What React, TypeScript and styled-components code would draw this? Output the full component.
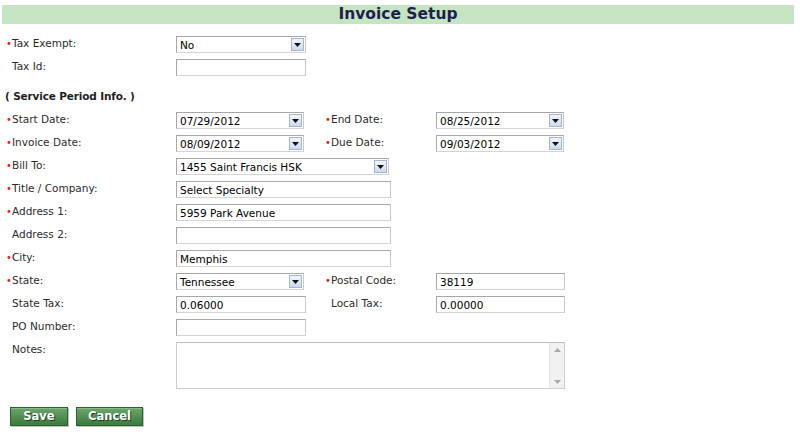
import React from "react";
import styled, { createGlobalStyle } from "styled-components";

const GlobalStyle = createGlobalStyle`
  html, body {
    margin: 0;
    padding: 0;
    background: #fff;
  }
  body {
    font-family: "DejaVu Sans", Verdana, sans-serif;
    font-size: 10.5px;
    color: #2b2b2b;
  }
`;

const Page = styled.div`
  width: 800px;
  height: 434px;
  box-sizing: border-box;
  padding: 5px 6px 0 2px;
  overflow: hidden;
`;

const TitleBar = styled.div`
  height: 19px;
  background: #c4e4c2;
  text-align: center;
  font-weight: bold;
  font-size: 15.5px;
  line-height: 19px;
  color: #1f1f4d;
`;

const Form = styled.div`
  padding: 12px 0 0 3px;
`;

const FieldGrid = styled.div`
  display: grid;
  grid-template-columns: 171px 148px 112px 1fr;
  grid-auto-rows: minmax(17px, auto);
  row-gap: 6px;
  align-items: start;
`;

const SectionTitle = styled.div`
  font-weight: bold;
  color: #1e1e1e;
  line-height: 16px;
  letter-spacing: -0.15px;
  margin: 12px 0 8px;
`;

const Label = styled.div<{ $col?: number }>`
  grid-column: ${(p) => p.$col ?? 1};
  display: flex;
  line-height: 15px;
  white-space: nowrap;
  color: #2b2b2b;
`;

const Bullet = styled.span`
  width: 7px;
  flex: none;
  padding-left: 1px;
  box-sizing: border-box;
  color: #ec1c1c;
  font-size: 10px;
`;

const Cell = styled.div<{ $col: number; $span?: number }>`
  grid-column: ${(p) => p.$col} / span ${(p) => p.$span ?? 1};
  display: flex;
`;

const SelectBox = styled.div<{ $w: number }>`
  width: ${(p) => p.$w}px;
  height: 17px;
  box-sizing: border-box;
  border: 1px solid #a7a7a7;
  border-right-color: #c9c9c9;
  border-bottom-color: #d4d4d4;
  background: #fff;
  display: flex;
  align-items: center;
  padding: 0 1px 0 3px;
  color: #000;
`;

const SelectText = styled.span`
  flex: 1;
  white-space: nowrap;
  overflow: hidden;
`;

const DropButton = styled.span`
  width: 13px;
  height: 13px;
  box-sizing: border-box;
  border: 1px solid #a2b5d2;
  background: linear-gradient(#f1f5fc, #cddaee);
  display: flex;
  align-items: center;
  justify-content: center;
`;

const TextBox = styled.input<{ $w: number }>`
  width: ${(p) => p.$w}px;
  height: 17px;
  box-sizing: border-box;
  margin: 0;
  border: 1px solid #a7a7a7;
  border-right-color: #c9c9c9;
  border-bottom-color: #d4d4d4;
  padding: 0 3px;
  font: inherit;
  color: #000;
  background: #fff;
  outline: none;
`;

const NotesBox = styled.div`
  width: 389px;
  height: 47px;
  box-sizing: border-box;
  border: 1px solid #cfcfcf;
  border-top-color: #bdbdbd;
  display: flex;
  background: #fff;
`;

const NotesText = styled.div`
  flex: 1;
`;

const ScrollTrack = styled.div`
  width: 14px;
  background: #f1f1f1;
  border-left: 1px solid #e6e6e6;
  display: flex;
  flex-direction: column;
  justify-content: space-between;
  align-items: center;
  padding: 5px 0 4px;
`;

const Buttons = styled.div`
  display: flex;
  gap: 8px;
  margin: 18px 0 0 5px;
`;

const GreenButton = styled.button<{ $w: number }>`
  width: ${(p) => p.$w}px;
  height: 19px;
  margin: 0;
  padding: 0;
  box-sizing: border-box;
  border: 1px solid #2f5e2f;
  background: linear-gradient(#6ba56b, #3d793d);
  box-shadow: inset 0 1px 0 #86bb86, 1px 1px 0 #b9c9b9;
  color: #fff;
  font-family: "DejaVu Sans", Verdana, sans-serif;
  font-weight: bold;
  font-size: 11.5px;
  line-height: 17px;
  text-shadow: 1px 1px 0 #1e3d1e;
`;

const Arrow = () => (
  <svg width="7" height="4" viewBox="0 0 7 4">
    <path d="M0 0h7L3.5 4z" fill="#111" />
  </svg>
);

const ScrollArrow = ({ up }: { up?: boolean }) => (
  <svg width="7" height="4" viewBox="0 0 7 4">
    <path d={up ? "M0 4h7L3.5 0z" : "M0 0h7L3.5 4z"} fill="#a8a8a8" />
  </svg>
);

const Select = ({ value, w }: { value: string; w: number }) => (
  <SelectBox $w={w}>
    <SelectText>{value}</SelectText>
    <DropButton>
      <Arrow />
    </DropButton>
  </SelectBox>
);

const FieldLabel = ({
  text,
  req,
  col,
}: {
  text: string;
  req?: boolean;
  col?: number;
}) => (
  <Label $col={col}>
    <Bullet>{req ? "•" : ""}</Bullet>
    {text}
  </Label>
);

export default function App() {
  return (
    <Page>
      <GlobalStyle />
      <TitleBar>Invoice Setup</TitleBar>
      <Form>
        <FieldGrid>
          <FieldLabel text="Tax Exempt:" req />
          <Cell $col={2}>
            <Select value="No" w={130} />
          </Cell>
          <FieldLabel text="Tax Id:" />
          <Cell $col={2}>
            <TextBox $w={130} defaultValue="" />
          </Cell>
        </FieldGrid>

        <SectionTitle>( Service Period Info. )</SectionTitle>

        <FieldGrid>
          <FieldLabel text="Start Date:" req />
          <Cell $col={2}>
            <Select value="07/29/2012" w={128} />
          </Cell>
          <FieldLabel text="End Date:" req col={3} />
          <Cell $col={4}>
            <Select value="08/25/2012" w={128} />
          </Cell>

          <FieldLabel text="Invoice Date:" req />
          <Cell $col={2}>
            <Select value="08/09/2012" w={128} />
          </Cell>
          <FieldLabel text="Due Date:" req col={3} />
          <Cell $col={4}>
            <Select value="09/03/2012" w={128} />
          </Cell>

          <FieldLabel text="Bill To:" req />
          <Cell $col={2} $span={3}>
            <Select value="1455 Saint Francis HSK" w={213} />
          </Cell>

          <FieldLabel text="Title / Company:" req />
          <Cell $col={2} $span={3}>
            <TextBox $w={215} defaultValue="Select Specialty" />
          </Cell>

          <FieldLabel text="Address 1:" req />
          <Cell $col={2} $span={3}>
            <TextBox $w={215} defaultValue="5959 Park Avenue" />
          </Cell>

          <FieldLabel text="Address 2:" />
          <Cell $col={2} $span={3}>
            <TextBox $w={215} defaultValue="" />
          </Cell>

          <FieldLabel text="City:" req />
          <Cell $col={2} $span={3}>
            <TextBox $w={215} defaultValue="Memphis" />
          </Cell>

          <FieldLabel text="State:" req />
          <Cell $col={2}>
            <Select value="Tennessee" w={128} />
          </Cell>
          <FieldLabel text="Postal Code:" req col={3} />
          <Cell $col={4}>
            <TextBox $w={129} defaultValue="38119" />
          </Cell>

          <FieldLabel text="State Tax:" />
          <Cell $col={2}>
            <TextBox $w={130} defaultValue="0.06000" />
          </Cell>
          <FieldLabel text="Local Tax:" col={3} />
          <Cell $col={4}>
            <TextBox $w={129} defaultValue="0.00000" />
          </Cell>

          <FieldLabel text="PO Number:" />
          <Cell $col={2}>
            <TextBox $w={130} defaultValue="" />
          </Cell>

          <FieldLabel text="Notes:" />
          <Cell $col={2} $span={3}>
            <NotesBox>
              <NotesText />
              <ScrollTrack>
                <ScrollArrow up />
                <ScrollArrow />
              </ScrollTrack>
            </NotesBox>
          </Cell>
        </FieldGrid>

        <Buttons>
          <GreenButton $w={58}>Save</GreenButton>
          <GreenButton $w={67}>Cancel</GreenButton>
        </Buttons>
      </Form>
    </Page>
  );
}
